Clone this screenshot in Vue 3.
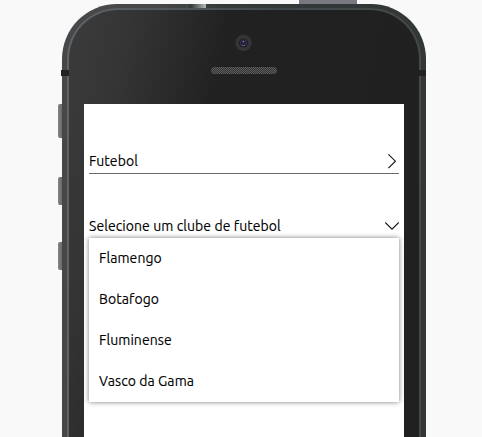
<script setup>
const clubs = ['Flamengo', 'Botafogo', 'Fluminense', 'Vasco da Gama']
</script>

<template>
  <main class="stage">
    <div class="phone">
      <i class="power"></i>
      <i class="gleam"></i>
      <i class="side mute"></i>
      <i class="side up"></i>
      <i class="side down"></i>
      <i class="band left"></i>
      <i class="band right"></i>
      <div class="rim">
        <div class="face">
          <header class="hardware">
            <svg class="camera" width="18" height="18" viewBox="0 0 18 18">
              <circle cx="8.5" cy="9" r="8.2" fill="#363536" />
              <circle cx="8.5" cy="9" r="4.6" fill="#1e1b26" />
              <circle cx="8.5" cy="9" r="3.2" fill="#272038" stroke="#3a3155" stroke-width=".8" />
              <circle cx="8.5" cy="7.6" r=".8" fill="#817a98" />
              <path d="M6.9 11.2q1.6.9 3.2 0" fill="none" stroke="#706a80" stroke-width=".8" />
            </svg>
            <svg class="speaker" width="66" height="7" viewBox="0 0 66 7">
              <defs>
                <pattern id="mesh" width="2" height="2" patternUnits="userSpaceOnUse">
                  <rect width="2" height="2" fill="#343434" />
                  <rect width="1" height="1" fill="#5c5c5c" />
                  <rect x="1" y="1" width="1" height="1" fill="#5c5c5c" />
                </pattern>
              </defs>
              <rect width="66" height="7" rx="3.5" fill="url(#mesh)" />
            </svg>
          </header>
          <section class="screen">
            <div class="field category">
              <span>Futebol</span>
              <svg width="14" height="16" viewBox="0 0 14 16"><path d="M3.4 1.3L10.4 8.2L3.4 15.1" /></svg>
            </div>
            <div class="field club">
              <span>Selecione um clube de futebol</span>
              <svg width="14" height="16" viewBox="0 0 14 16"><path d="M.2 4.5L7 11.2L13.8 4.5" /></svg>
            </div>
            <ul class="options">
              <li v-for="club in clubs" :key="club">{{ club }}</li>
            </ul>
          </section>
        </div>
      </div>
    </div>
  </main>
</template>

<style>
body { margin: 0; background: #f9f9f9; }
</style>

<style scoped>
* { box-sizing: border-box; }
.stage {
  width: 482px;
  height: 437px;
  padding: 4px 56px 0 62px;
  overflow: hidden;
  background: #f9f9f9;
}
.phone {
  position: relative;
  height: 500px;
  padding: 4px 5px 0;
  border-radius: 55px 55px 0 0;
  background: linear-gradient(90deg, #454749 0%, #474948 25%, #343a39 45%, #323736 100%);
}
.rim {
  height: 100%;
  padding: 2px 2px 0;
  border-radius: 51px 51px 0 0;
  background: linear-gradient(90deg, #606469, #51565a 30%, #40474a 60%, #45494b);
}
.face {
  height: 100%;
  padding: 1px 15px 0;
  border-radius: 49px 49px 0 0;
  background: linear-gradient(102deg, #3b3b3b 0, #353535 60px, #212121 160px, #202020 100%);
}
.power, .gleam, .side, .band { position: absolute; }
.power { left: 237px; top: -4px; width: 58px; height: 4px; background: #7b7881; }
.gleam { left: 124px; top: 0; width: 20px; height: 4px; background: linear-gradient(90deg, #454948, #35393a 25%, #b5b8b5); }
.side { left: -4px; width: 4px; border-radius: 2px 0 0 2px; background: linear-gradient(90deg, #858587, #68696b); }
.mute { top: 100px; height: 34px; }
.up { top: 173px; height: 28px; }
.down { top: 238px; height: 28px; }
.band { z-index: 1; top: 66px; width: 7px; height: 6px; background: #222123; }
.left { left: -1px; width: 8px; }
.right { right: 0; }
.hardware {
  display: flex;
  flex-direction: column;
  align-items: center;
  height: 93px;
  padding-top: 23px;
}
.camera { flex: none; }
.speaker { flex: none; margin-top: 15px; }
.screen {
  height: 390px;
  padding: 44px 5px 0;
  background: #fff;
  color: #000;
  font: 14px/20px Ubuntu, "Noto Sans", sans-serif;
  letter-spacing: .07px;
  -webkit-text-stroke: .12px #000;
}
.field {
  display: flex;
  justify-content: space-between;
  align-items: center;
}
.field svg { display: block; fill: none; stroke: #111; stroke-width: 1.1; }
.category { height: 26px; border-bottom: 1px solid #6c6a6c; }
.club { height: 25px; margin-top: 39px; }
.options {
  height: 164px;
  margin: 0;
  padding: 0 10px;
  list-style: none;
  background: #fff;
  box-shadow: 0 0 5px #777;
}
.options li { height: 41px; line-height: 40px; }
</style>
